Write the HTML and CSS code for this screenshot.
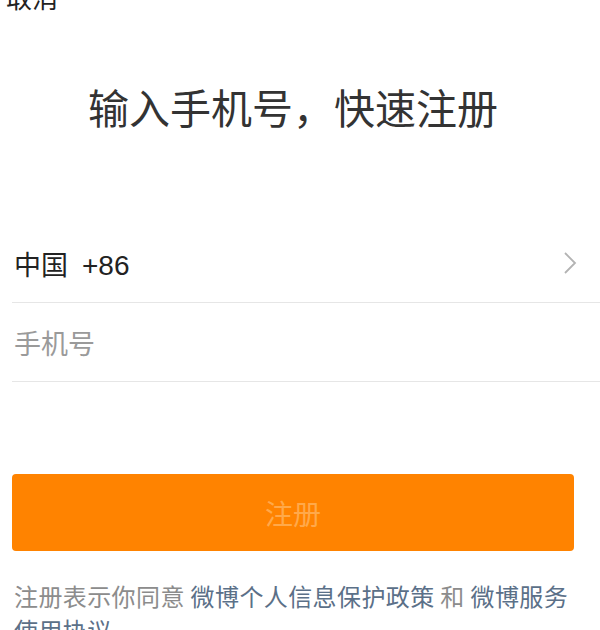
FILE: index.html
```html
<!DOCTYPE html>
<html>
  <head>
    <title>注册</title>
    <link rel="stylesheet" href="styles.css">
  </head>
  <body>
    <div class="page">
      <div class="topbar"><span class="cancel">取消</span></div>

      <h1 class="title">输入手机号，快速注册</h1>

      <form class="form">
        <div class="row">
          <span class="country">中国<span class="code">+86</span></span>
          <svg class="chevron" width="14" height="24" viewBox="0 0 14 24">
            <path d="M2 2 L12 12 L2 22" fill="none" stroke="#b3b3b3" stroke-width="1.8"/>
          </svg>
        </div>
        <div class="row">
          <input class="phone" type="text" placeholder="手机号">
        </div>

        <button class="submit" type="button">注册</button>
      </form>

      <p class="terms">
        注册表示你同意 <a href="#">微博个人信息保护政策</a> 和 <a href="#">微博服务使用协议</a>
      </p>
    </div>
  </body>
</html>
```

FILE: styles.css
```css
body {
  margin: 0;
  background-color: #fff;
  font-family: "Noto Sans CJK SC", "Noto Sans", sans-serif;
  overflow: hidden;
}
.page {
  width: 562px;
  padding-left: 12px;
}
.topbar {
  height: 10px;
}
.cancel {
  display: block;
  font-size: 26px;
  line-height: 36px;
  margin-top: -21px;
  margin-left: -6px;
  color: #222;
}
.title {
  margin: 89px 0 0;
  font-size: 41px;
  line-height: 56px;
  font-weight: normal;
  text-align: center;
  color: #333;
}
.form {
  margin-top: 90px;
}
.row {
  display: flex;
  align-items: center;
  justify-content: space-between;
  height: 78px;
  margin-right: -26px;
  padding-right: 23px;
  border-bottom: 1px solid #e6e6e6;
}
.country {
  padding-left: 2px;
  font-size: 27px;
  color: #222;
}
.code {
  margin-left: 14px;
  font-family: "Liberation Sans", Arial, sans-serif;
  font-size: 28px;
}
.phone {
  width: 100%;
  border: none;
  outline: none;
  padding: 0 0 0 2px;
  font-family: inherit;
  font-size: 27px;
  color: #222;
  background: transparent;
}
.phone::placeholder {
  color: #9a9a9a;
}
.submit {
  display: block;
  width: 562px;
  height: 77px;
  margin-top: 92px;
  border: none;
  border-radius: 4px;
  background-color: #ff8300;
  color: #ffa94a;
  font-family: inherit;
  font-size: 28px;
}
.terms {
  margin: 28px 0 0;
  padding-left: 2px;
  width: 564px;
  font-size: 24px;
  line-height: 34px;
  letter-spacing: 0.4px;
  color: #8c8c8c;
}
.terms a {
  color: #5b7088;
  text-decoration: none;
}
```
